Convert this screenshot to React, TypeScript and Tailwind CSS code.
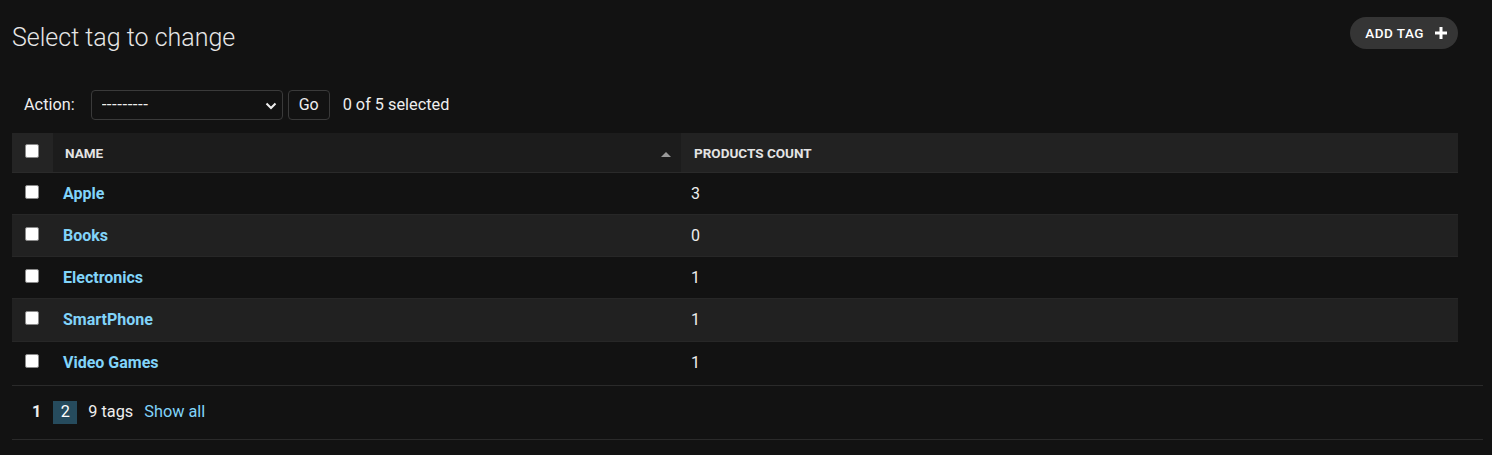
import React from 'react'

const TAGS = [
  { name: 'Apple', count: 3 },
  { name: 'Books', count: 0 },
  { name: 'Electronics', count: 1 },
  { name: 'SmartPhone', count: 1 },
  { name: 'Video Games', count: 1 },
]

function Check() {
  return (
    <input
      type="checkbox"
      className="block w-[14px] h-[14px] m-0 appearance-none bg-white border border-[#8a8a8a] rounded-[2px]"
    />
  )
}

export default function App() {
  return (
    <div className="min-h-screen bg-[#121212] text-[#eeeeee] pl-[12px] pt-[17px]" style={{ fontFamily: 'Roboto, "Liberation Sans", sans-serif' }}>
      {/* Title + add button */}
      <div className="flex items-start justify-between w-[1446px]">
        <h1 className="pt-[5px] text-[25px] leading-[32px] font-light text-[#e6e6e6]">Select tag to change</h1>
        <a className="flex items-center h-[32px] pl-[15px] pr-[11px] rounded-full bg-[#353535] text-white text-[13.5px] font-medium tracking-[0.5px]">
          ADD TAG
          <svg width="12" height="12" viewBox="0 0 12 12" className="ml-[11px]">
            <rect x="4.5" y="0" width="3" height="12" fill="#fff" />
            <rect x="0" y="4.5" width="12" height="3" fill="#fff" />
          </svg>
        </a>
      </div>

      {/* Actions */}
      <div className="flex items-center h-[30px] mt-[36px] text-[16.3px]">
        <span className="ml-[12px]">Action:</span>
        <div className="relative ml-[16px]">
          <select className="appearance-none w-[192px] h-[30px] pl-[10px] bg-[#121212] border border-[#3a3a3a] rounded-[4px] text-[17px] tracking-[0.5px] text-[#eeeeee] outline-none">
            <option>---------</option>
          </select>
          <svg width="12" height="8" viewBox="0 0 12 8" className="absolute right-[6px] top-[12px] pointer-events-none">
            <path d="M1.5 1.5 L6 6 L10.5 1.5" stroke="#eeeeee" strokeWidth="2" fill="none" />
          </svg>
        </div>
        <button className="ml-[5px] w-[42px] h-[30px] border border-[#3a3a3a] rounded-[4px] bg-[#121212] text-[16px] text-[#eeeeee]">Go</button>
        <span className="ml-[13px]">0 of 5 selected</span>
      </div>

      {/* Results */}
      <table className="mt-[13px] w-[1446px] border-collapse table-fixed">
        <colgroup>
          <col className="w-[41px]" />
          <col className="w-[628px]" />
          <col />
        </colgroup>
        <thead>
          <tr className="border-b border-[#2a2a2a]">
            <th className="bg-[#242424] align-top pt-[11px] pb-[14px] pl-[13px]">
              <Check />
            </th>
            <th className="bg-[#1c1c1c] align-top pt-[12px] pb-[11px] pl-[12px] pr-[10px] text-left">
              <div className="flex items-center justify-between">
                <span className="text-[13.5px] leading-[16px] font-bold text-[#e4e4e4]">NAME</span>
                <svg width="10" height="5" viewBox="0 0 10 5" className="mt-[2px]">
                  <path d="M0 5 L5 0 L10 5 Z" fill="#9a9a9a" />
                </svg>
              </div>
            </th>
            <th className="bg-[#222222] align-top pt-[12px] pb-[11px] pl-[13px] text-left text-[13.5px] leading-[16px] font-bold text-[#e4e4e4]">
              PRODUCTS COUNT
            </th>
          </tr>
        </thead>
        <tbody>
          {TAGS.map((t, i) => (
            <tr key={t.name} className={`${i % 2 === 1 ? 'bg-[#212121]' : 'bg-[#121212]'} ${i < TAGS.length - 1 ? 'border-b border-[#272727]' : ''}`}>
              <td className="align-top pt-[12px] pl-[13px]">
                <Check />
              </td>
              <td className={`align-top pt-[10px] ${i >= 3 ? 'pb-[10px]' : 'pb-[9px]'} pl-[10px] text-[16px] leading-[22px] font-bold text-[#81d4fa]`}>{t.name}</td>
              <td className="align-top pt-[10px] pl-[10px] text-[16px] leading-[22px]">{t.count}</td>
            </tr>
          ))}
        </tbody>
      </table>

      {/* Paginator */}
      <div className="flex items-center w-[1471px] h-[55px] mt-[1px] border-t border-b border-[#2a2a2a] text-[16.3px]">
        <span className="ml-[20px] font-bold">1</span>
        <a className="ml-[12px] w-[24px] h-[23px] flex items-center justify-center bg-[#264b5d] text-white">2</a>
        <span className="ml-[11px]">9 tags</span>
        <a className="ml-[11px] text-[#81d4fa]">Show all</a>
      </div>
    </div>
  )
}
